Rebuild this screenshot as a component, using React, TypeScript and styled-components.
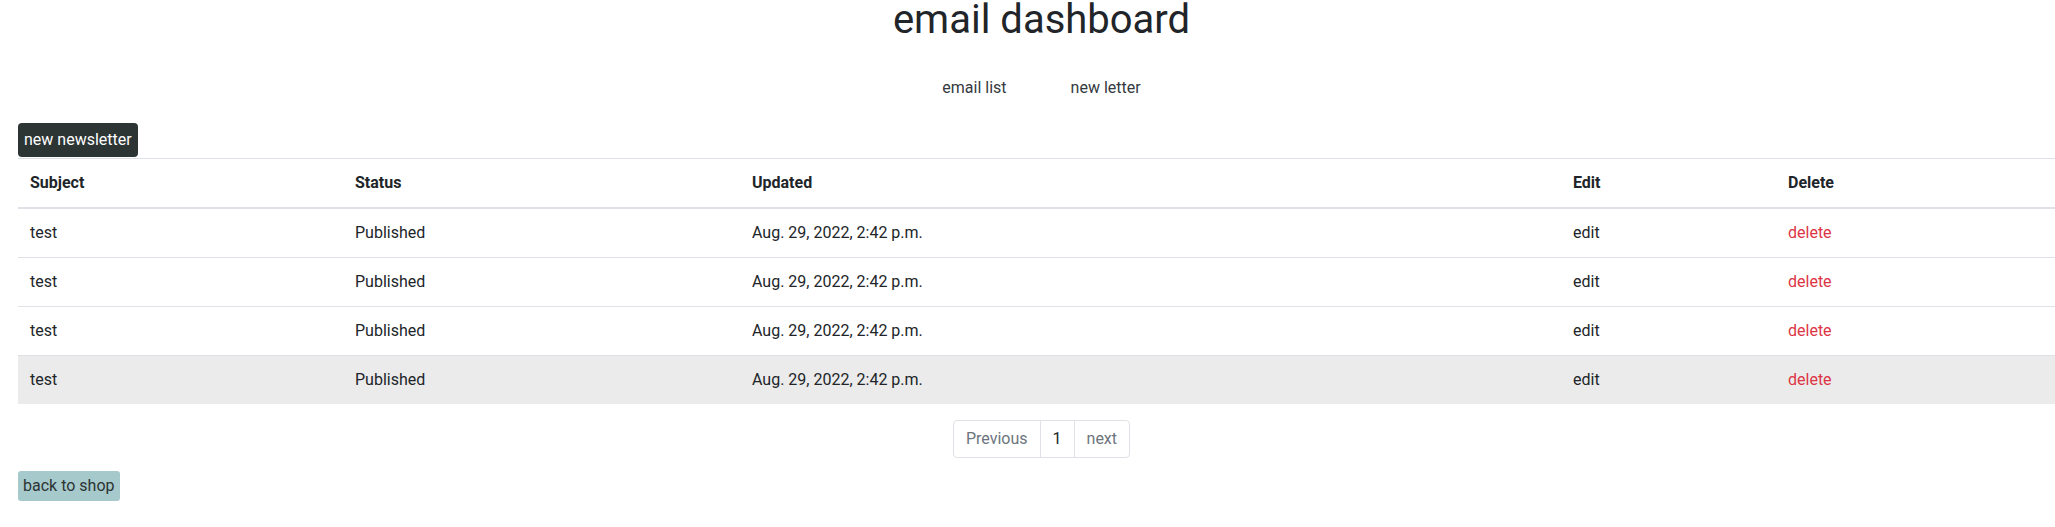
import React, { FC } from 'react';
import styled, { createGlobalStyle } from 'styled-components';

const GlobalStyle = createGlobalStyle`
  html, body {
    margin: 0;
    overflow-x: hidden;
    background: #fff;
    font-family: Roboto, "Liberation Sans", Arial, sans-serif;
    font-size: 16px;
    line-height: 24px;
    color: #212529;
  }
`;

const Page = styled.div`
  box-sizing: border-box;
  width: calc(100% + 10px);
  padding-left: 18px;
`;

const Title = styled.h1`
  margin: 0;
  text-align: center;
  font-size: 40px;
  line-height: 40px;
  font-weight: 400;
  color: #212529;
`;

const Nav = styled.nav`
  display: flex;
  justify-content: center;
  gap: 64px;
  margin-top: 36px;
`;

const NavLink = styled.a`
  color: #343a40;
  text-decoration: none;
  font-size: 16px;
  line-height: 24px;
`;

const Toolbar = styled.div`
  display: flex;
  margin-top: 23px;
`;

type ButtonProps = {
  variant: 'dark' | 'teal',
};

const Button = styled.button<ButtonProps>`
  font-family: inherit;
  font-size: 16px;
  line-height: 24px;
  border: none;
  cursor: pointer;
  ${ props => (props.variant === 'dark' ? `
    background: #2c3434;
    color: #fff;
    padding: 5px 6px;
    border-radius: 4px;
  ` : `
    background: #a6c9cb;
    color: #2c3434;
    padding: 3px 5px;
    border-radius: 3px;
  `)};
`;

const Table = styled.table`
  width: 100%;
  table-layout: fixed;
  border-collapse: collapse;
  margin-top: 1px;
`;

const HeadRow = styled.tr`
  border-top: 1px solid #dee2e6;
  border-bottom: 2px solid #dee2e6;
`;

const Th = styled.th`
  text-align: left;
  font-weight: 700;
  padding: 12px;
  color: #212529;
`;

type RowProps = {
  highlighted?: boolean,
};

const Row = styled.tr<RowProps>`
  border-bottom: 1px solid #dee2e6;
  background: ${ props => (props.highlighted ? '#ebebeb' : 'transparent') };
  &:last-child {
    border-bottom: none;
  }
`;

const Td = styled.td`
  padding: 12px;
  color: #212529;
`;

type ActionProps = {
  danger?: boolean,
};

const Action = styled.a<ActionProps>`
  color: ${ props => (props.danger ? '#dc3545' : '#212529') };
  text-decoration: none;
`;

const Pagination = styled.ul`
  display: flex;
  justify-content: center;
  list-style: none;
  padding: 0;
  margin: 16px 0 13px;
`;

type PageItemProps = {
  active?: boolean,
};

const PageItem = styled.li<PageItemProps>`
  padding: 6px 12px;
  border: 1px solid #dee2e6;
  margin-left: -1px;
  color: ${ props => (props.active ? '#212529' : '#6c757d') };
  &:first-child {
    border-radius: 4px 0 0 4px;
    margin-left: 0;
  }
  &:last-child {
    border-radius: 0 4px 4px 0;
  }
`;

const columns = [
  { label: 'Subject', width: 325 },
  { label: 'Status', width: 397 },
  { label: 'Updated', width: 821 },
  { label: 'Edit', width: 215 },
  { label: 'Delete' },
];

const letters = [1, 2, 3, 4].map((id) => ({
  id,
  subject: 'test',
  status: 'Published',
  updated: 'Aug. 29, 2022, 2:42 p.m.',
}));

const App: FC = () => (
  <Page>
    <GlobalStyle />
    <Title>email dashboard</Title>
    <Nav>
      <NavLink href="#">email list</NavLink>
      <NavLink href="#">new letter</NavLink>
    </Nav>
    <Toolbar>
      <Button variant="dark">new newsletter</Button>
    </Toolbar>
    <Table>
      <colgroup>
        { columns.map((col) => (
          <col key={ col.label } style={ col.width ? { width: col.width } : undefined } />
        )) }
      </colgroup>
      <thead>
        <HeadRow>
          { columns.map((col) => <Th key={ col.label }>{ col.label }</Th>) }
        </HeadRow>
      </thead>
      <tbody>
        { letters.map((letter, i) => (
          <Row key={ letter.id } highlighted={ i === letters.length - 1 }>
            <Td>{ letter.subject }</Td>
            <Td>{ letter.status }</Td>
            <Td>{ letter.updated }</Td>
            <Td><Action href="#">edit</Action></Td>
            <Td><Action href="#" danger>delete</Action></Td>
          </Row>
        )) }
      </tbody>
    </Table>
    <Pagination>
      <PageItem>Previous</PageItem>
      <PageItem active>1</PageItem>
      <PageItem>next</PageItem>
    </Pagination>
    <Button variant="teal">back to shop</Button>
  </Page>
);

export default App;
